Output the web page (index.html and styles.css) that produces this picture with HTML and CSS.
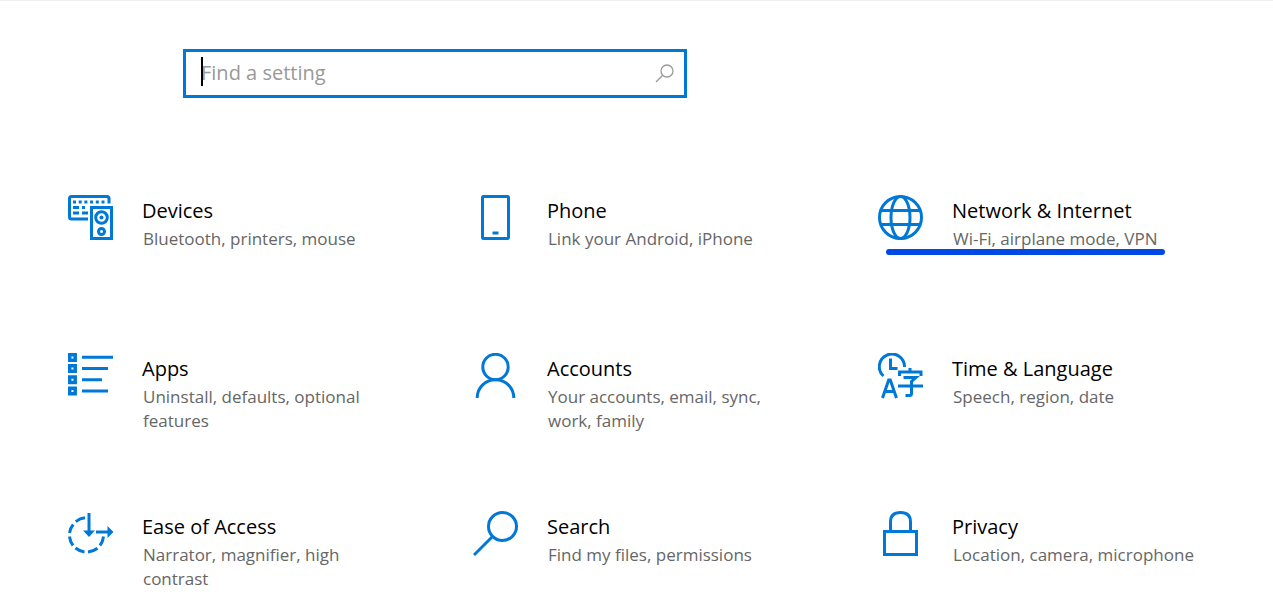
FILE: index.html
```html
<!DOCTYPE html>
<html lang="en">
<head>
    <meta charset="UTF-8">
    <meta name="viewport" content="width=device-width, initial-scale=1.0">
    <title>Settings</title>
    <link rel="stylesheet" href="styles.css">
</head>
<body>
    <form class="search" action="#">
        <input type="text" id="find" name="find" placeholder="Find a setting" aria-label="Find a setting">
        <span class="caret"></span>
        <svg class="search-icon" viewBox="0 0 20 20">
            <circle cx="12" cy="7" r="6"/>
            <path d="M7.7 11.3L1 18"/>
        </svg>
    </form>

    <main class="categories">
        <a class="category" href="#devices">
            <svg class="icon" viewBox="8 7 46 46">
                <path d="M28 31H11.500Q9.500 31 9.500 29V10.500Q9.500 8.500 11.500 8.500H47Q49 8.500 49 10.500V15.500"/>
                <path d="M13 14H46" stroke-dasharray="3 2.700"/>
                <path d="M13 19.500H19M22 19.500H25M13 25H19M22 25H28"/>
                <rect x="31.500" y="19.500" width="20" height="31"/>
                <circle cx="41.500" cy="29.500" r="5.800"/>
                <circle class="fill" cx="41.500" cy="29.500" r="2"/>
                <circle cx="41.500" cy="43.500" r="3"/>
            </svg>
            <div class="text">
                <h2>Devices</h2>
                <p>Bluetooth, printers, mouse</p>
            </div>
        </a>

        <a class="category" href="#phone">
            <svg class="icon" viewBox="8 7 46 46">
                <rect x="17.500" y="8.500" width="26" height="42" rx="1"/>
                <path d="M27.500 45H33.500"/>
            </svg>
            <div class="text">
                <h2>Phone</h2>
                <p>Link your Android, iPhone</p>
            </div>
        </a>

        <a class="category marked" href="#network">
            <svg class="icon" viewBox="8 7 46 46">
                <circle cx="30.500" cy="29.500" r="21"/>
                <ellipse cx="30.500" cy="29.500" rx="9.500" ry="21"/>
                <path d="M11 22.500H50M11 36.500H50"/>
            </svg>
            <div class="text">
                <h2>Network &amp; Internet</h2>
                <p>Wi-Fi, airplane mode, VPN</p>
            </div>
        </a>

        <a class="category" href="#apps">
            <svg class="icon" viewBox="8 7 46 46">
                <path stroke-width="3.500" d="M9.700 8.700H15.200V14.200H9.700ZM9.700 19.700H15.200V25.200H9.700ZM9.700 31H15.200V36.500H9.700ZM9.700 42.200H15.200V47.700H9.700Z"/>
                <path d="M22 11.200H53M22 22.500H48M22 33.800H42M22 45H48"/>
            </svg>
            <div class="text">
                <h2>Apps</h2>
                <p>Uninstall, defaults, optional features</p>
            </div>
        </a>

        <a class="category" href="#accounts">
            <svg class="icon" viewBox="8 7 46 46">
                <circle cx="30.500" cy="21" r="12.700"/>
                <path d="M12.200 52C12.200 42 20 33.800 30.500 33.800S48.800 42 48.800 52"/>
            </svg>
            <div class="text">
                <h2>Accounts</h2>
                <p>Your accounts, email, sync, work, family</p>
            </div>
        </a>

        <a class="category" href="#time">
            <svg class="icon" viewBox="8 7 46 46">
                <path d="M13.500 30A12.600 12.600 0 1 1 34.500 21"/>
                <path d="M20.500 12.500V22.500H27.500"/>
                <path d="M12.500 52L18.700 34H20.300L26.500 52M14.500 45.500H24.500"/>
                <path d="M29.500 30V26H51V30M40 22V26M33.500 31.500H46L41.500 35.500V47.500Q41.500 49.500 39.500 49.500H35.500M28 40H53"/>
            </svg>
            <div class="text">
                <h2>Time &amp; Language</h2>
                <p>Speech, region, date</p>
            </div>
        </a>

        <a class="category" href="#ease">
            <svg class="icon" viewBox="8 7 46 46">
                <path d="M25 13.800Q20 14.300 15.800 17.700M13.200 20.500Q10 24.500 9.500 29M9.500 32.500Q10 37.500 13 41.500M15.500 44Q19.500 47.300 24.500 47.900M28 47.900Q33.500 47.300 37.500 44.200M40 41.500Q43 37.500 43.500 32.500"/>
                <path d="M29 9V27M36 28H50"/>
                <path class="fill" d="M23 26.500H35L29 33ZM47.500 22L53.500 28L47.500 34Z"/>
            </svg>
            <div class="text">
                <h2>Ease of Access</h2>
                <p>Narrator, magnifier, high contrast</p>
            </div>
        </a>

        <a class="category" href="#search">
            <svg class="icon" viewBox="8 7 46 46">
                <circle cx="37.500" cy="22.500" r="14"/>
                <path d="M27.500 32.500L9 51"/>
            </svg>
            <div class="text">
                <h2>Search</h2>
                <p>Find my files, permissions</p>
            </div>
        </a>

        <a class="category" href="#privacy">
            <svg class="icon" viewBox="8 7 46 46">
                <rect x="14.500" y="27.500" width="32" height="23"/>
                <path d="M20.500 27V18Q20.500 8.500 30.500 8.500T40.500 18V27"/>
            </svg>
            <div class="text">
                <h2>Privacy</h2>
                <p>Location, camera, microphone</p>
            </div>
        </a>
    </main>
</body>
</html>
```

FILE: styles.css
```css
body {
    margin: 0;
    border-top: 1px solid #f0f0f0;
    background: #fff;
    font-family: "Open Sans", "Noto Sans", sans-serif;
}

.search {
    position: relative;
    max-width: 504px;
    margin: 48px 24px 0 183px;
}

.search input {
    display: block;
    box-sizing: border-box;
    width: 100%;
    height: 49px;
    padding: 0 48px 2px 15px;
    border: 3px solid #0078d7;
    outline: none;
    font-family: inherit;
    font-size: 20px;
    color: #000;
}

.search input::placeholder {
    color: #999;
    opacity: 1;
}

.caret {
    position: absolute;
    top: 8px;
    left: 18px;
    width: 2px;
    height: 29px;
    background: #000;
}

.search-icon {
    position: absolute;
    top: 15px;
    right: 12px;
    width: 20px;
    height: 20px;
    fill: none;
    stroke: #999;
    stroke-width: 1.3;
}

.categories {
    display: grid;
    grid-template-columns: repeat(3, 1fr);
    grid-auto-rows: minmax(80px, auto);
    row-gap: 78px;
    margin-top: 97px;
    padding-left: 58px;
}

.category {
    display: flex;
    align-items: flex-start;
    gap: 28px;
    padding-left: 10px;
    color: #000;
    text-decoration: none;
}

.icon {
    flex: none;
    width: 46px;
    height: 46px;
    fill: none;
    stroke: #0078d7;
    stroke-width: 3;
}

.icon .fill {
    fill: #0078d7;
    stroke: none;
}

.text {
    position: relative;
    max-width: 252px;
    padding-top: 2px;
}

.text h2 {
    margin: 0;
    font-size: 20px;
    font-weight: 400;
    line-height: 28px;
}

.text p {
    margin: 2px 0 0;
    padding-left: 1px;
    font-size: 17px;
    line-height: 24px;
    color: #666;
}

/* pen line under the highlighted category */
.marked .text::after {
    content: "";
    position: absolute;
    left: -66px;
    right: -8px;
    bottom: -4px;
    height: 6px;
    border-radius: 3px;
    background: #0049e6;
}
```
